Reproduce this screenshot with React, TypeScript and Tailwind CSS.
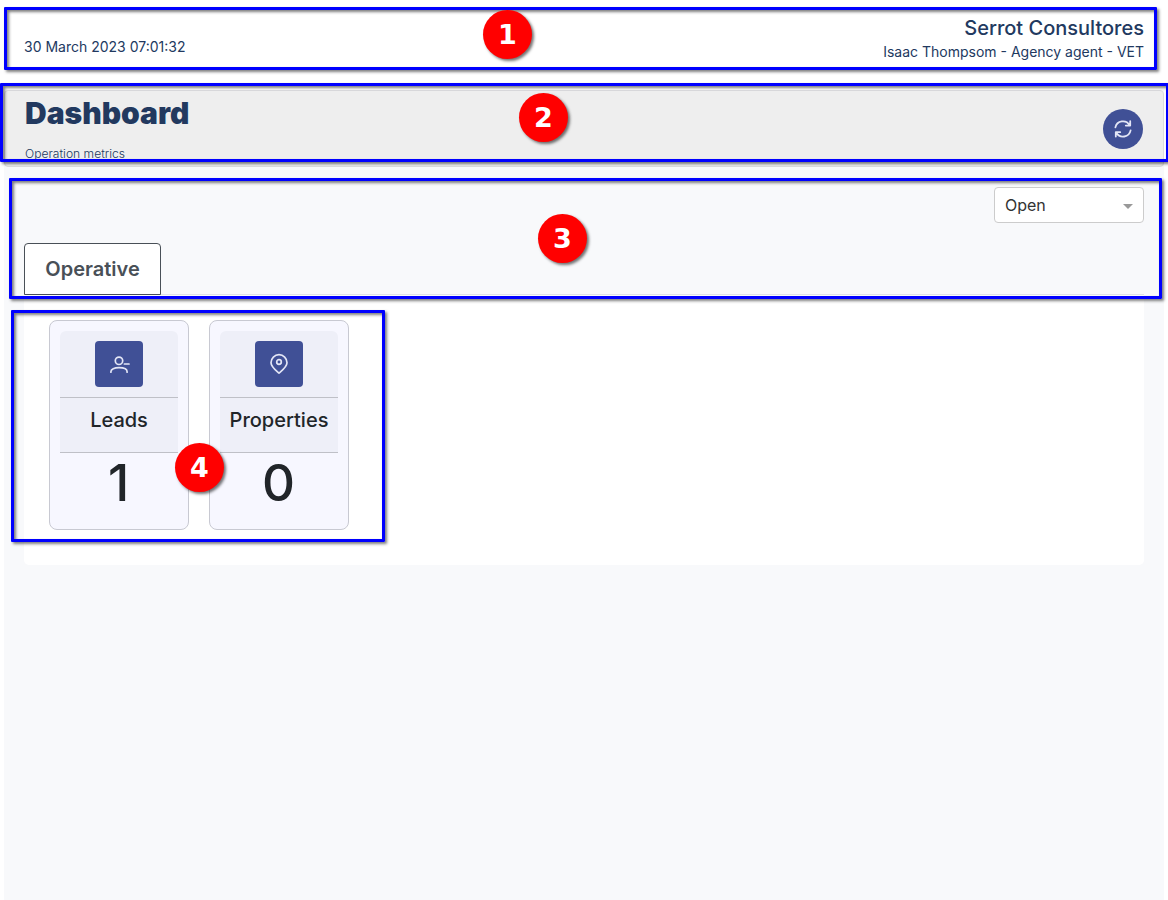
import type { ReactNode } from "react";

const outline = "pointer-events-none absolute border-[3px] border-[#0000ff] rounded-[1px] shadow-[2px_2px_3px_rgba(0,0,0,0.5),inset_2px_2px_3px_rgba(0,0,0,0.5)]";

function Callout({ n, place }: { n: number; place: string }) {
  return (
    <div
      className={`absolute flex size-[48.4px] items-center justify-center rounded-full bg-[#ff0000] font-['DejaVu_Sans',sans-serif] text-[27px] leading-none font-bold text-white shadow-[2px_2px_3px_rgba(0,0,0,0.55)] ${place}`}
    >
      <span>{n}</span>
    </div>
  );
}

function RefreshIcon() {
  return (
    <svg viewBox="0 0 20 20" className="size-5" fill="none" stroke="#e3e6f6" strokeWidth="1.8" strokeLinecap="round" strokeLinejoin="round">
      <path d="M2.4 8.4A7.7 7.7 0 0 1 16.6 6.2M17.2 2.2V6.6H12.8" />
      <path d="M17.6 11.4A7.7 7.7 0 0 1 3.4 13.8M2.8 17.6V13.2H7.2" />
    </svg>
  );
}

function UserMinusIcon() {
  return (
    <svg viewBox="0 0 24 24" className="size-6" fill="none" stroke="#e3e6f6" strokeWidth="1.7" strokeLinecap="round">
      <circle cx="12" cy="8.8" r="3.7" />
      <path d="M3.9 20.2V19.8C3.9 17 7.4 15.7 12 15.7S20.1 17 20.1 19.8V20.2M17.4 12H22" />
    </svg>
  );
}

function MarkerIcon() {
  return (
    <svg viewBox="0 0 24 24" className="size-6" fill="none" stroke="#e3e6f6" strokeWidth="1.7" strokeLinejoin="round">
      <path d="M12 21.2C9 18.6 4 14.6 4 10.7a8 8 0 0 1 16 0C20 14.6 15 18.6 12 21.2Z" />
      <circle cx="12" cy="10" r="2.3" />
    </svg>
  );
}

function Metric({ label, value, icon }: { label: string; value: number; icon: ReactNode }) {
  return (
    <article className="h-[210px] w-[140px] rounded-lg border border-[#c8c9d2] bg-[#f7f7ff] p-[10px] text-center text-[#212529]">
      <div className="flex h-[67px] justify-center rounded-t-md border-b border-[#bfc0c7] bg-[#eeeff8] pt-[10px]">
        <div className="flex h-[46px] w-12 items-center justify-center rounded bg-[#405096]">{icon}</div>
      </div>
      <h2 className="h-[55px] border-b border-[#bfc0c7] bg-[#eeeff8] pt-[10px] text-[20px] leading-6 font-medium">{label}</h2>
      <p className="pr-px text-[51.2px] leading-[58px] font-medium">{value}</p>
    </article>
  );
}

export default function App() {
  return (
    <div className="relative h-[900px] w-[1168px] overflow-hidden bg-white px-1 font-['Inter',sans-serif] text-[#22395f]">
      <header className="flex h-[90px] justify-between px-5">
        <time className="pt-[37px] text-[14px] leading-5">30 March 2023 07:01:32</time>
        <div className="pt-4 text-right">
          <p className="text-[20px] leading-6 font-medium">Serrot Consultores</p>
          <p className="mt-[2px] text-[14px] leading-5">Isaac Thompsom - Agency agent - VET</p>
        </div>
      </header>

      <main className="h-[810px] bg-[#f8f9fb]">
        <section className="flex h-[77px] justify-between rounded-[4px] border border-[#dcdcdf] bg-[#eeeeee] px-5">
          <div>
            <h1 className="pt-[5px] text-[30px] leading-[34px] font-black">Dashboard</h1>
            <p className="mt-[15px] text-[12.1px] leading-[18px] font-light">Operation metrics</p>
          </div>
          <button aria-label="Refresh" className="mt-[18px] flex size-10 items-center justify-center rounded-full bg-[#405096]">
            <RefreshIcon />
          </button>
        </section>

        <div className="px-5 pt-5">
          <div className="flex justify-end">
            <button className="flex h-9 w-[150px] items-center justify-between rounded border border-[#cccccc] bg-white pr-[10px] pl-[10px] text-[16px] text-[#333333]">
              Open
              <svg viewBox="0 0 10 5" className="mt-[2px] h-[5px] w-[10px]"><path d="M0 0h10L5 5Z" fill="#999999" /></svg>
            </button>
          </div>
          <nav className="mt-5 flex h-[52px] border-b border-[#dee2e6]">
            <button className="h-[52px] w-[137px] rounded-t border border-[#495057] bg-white text-[20px] font-semibold text-[#495057]">Operative</button>
          </nav>
          <section className="flex h-[270px] gap-5 rounded-b-[5px] bg-white pt-[25px] pl-[25px]">
            <Metric label="Leads" value={1} icon={<UserMinusIcon />} />
            <Metric label="Properties" value={0} icon={<MarkerIcon />} />
          </section>
        </div>
      </main>

      <div className={`top-[7px] left-1 h-[63px] w-[1153px] ${outline}`} />
      <div className={`top-[83px] left-0 h-[79px] w-[1169px] ${outline}`} />
      <div className={`top-[178px] left-[9px] h-[121px] w-[1153px] ${outline}`} />
      <div className={`top-[310px] left-[11px] h-[232px] w-[374px] ${outline}`} />
      <Callout n={1} place="top-[10.3px] left-[483.3px]" />
      <Callout n={2} place="top-[93.3px] left-[519.3px]" />
      <Callout n={3} place="top-[214.3px] left-[538.3px]" />
      <Callout n={4} place="top-[443.3px] left-[175.3px]" />
    </div>
  );
}
